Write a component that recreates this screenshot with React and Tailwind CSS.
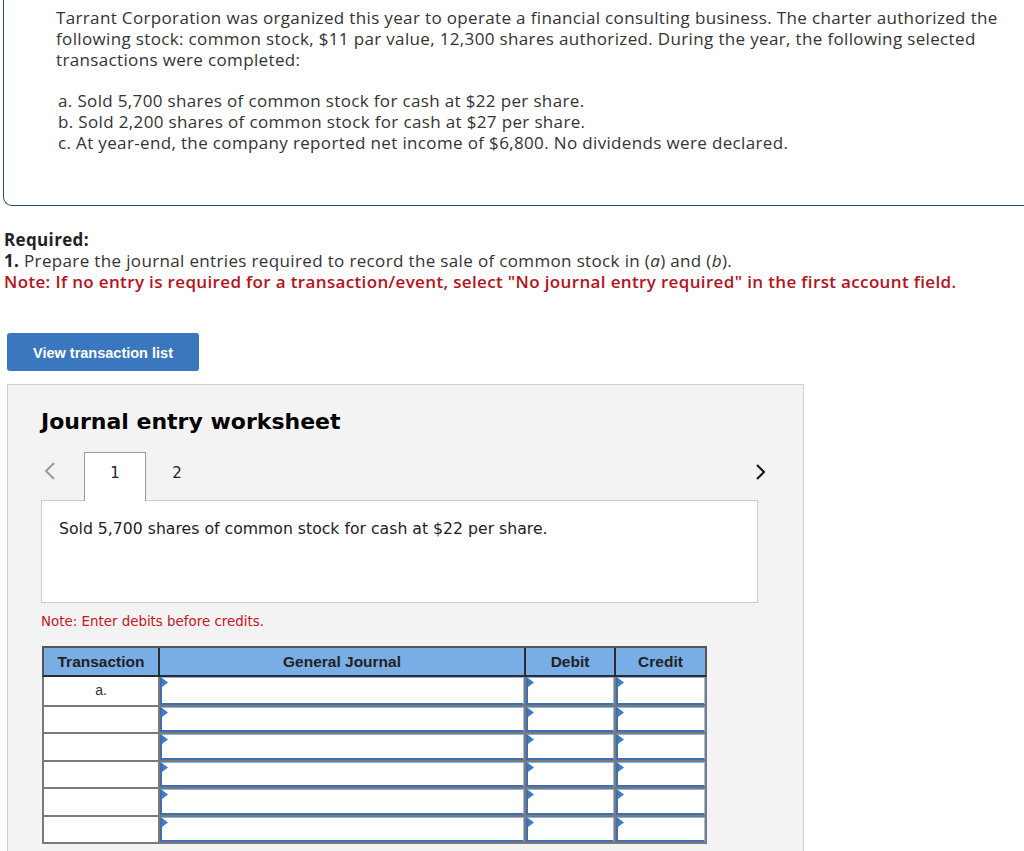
import React from "react";

const rows = ["a.", "", "", "", "", ""];

function InputCell() {
    return (
        <div className="relative h-full border-l-2 border-t border-b-2 border-r border-l-[#3f6fb0] border-t-[#8fb3e0] border-b-[#3f6fb0] border-r-[#9ebde6] bg-white">
            <svg className="absolute left-0 top-0" width="6" height="9" viewBox="0 0 6 9">
                <polygon points="0,0 6,4.5 0,9" fill="#3f7bc6" />
            </svg>
        </div>
    );
}

export default function App() {
    return (
        <div className="bg-white text-[#333] font-['Open_Sans','Liberation_Sans',sans-serif] text-[17px] tracking-[0.35px] pb-10">
            {/* Problem statement */}
            <div className="ml-[3px] h-[206px] border-l border-b border-[#1e4d7e] rounded-bl-[9px] pl-[52px] pr-3 pt-[7px] leading-[21px]">
                <p>
                    Tarrant Corporation was organized this year to operate a financial consulting business. The charter authorized the
                    following stock: common stock, $11 par value, 12,300 shares authorized. During the year, the following selected
                    transactions were completed:
                </p>
                <div className="mt-[20px] pl-[2px]">
                    <p>a. Sold 5,700 shares of common stock for cash at $22 per share.</p>
                    <p>b. Sold 2,200 shares of common stock for cash at $27 per share.</p>
                    <p>c. At year-end, the company reported net income of $6,800. No dividends were declared.</p>
                </div>
            </div>

            {/* Required */}
            <div className="pl-[4px] mt-[23px] leading-[21px]">
                <p className="font-bold text-[#222]">Required:</p>
                <p>
                    <span className="font-bold text-[#222]">1.</span> Prepare the journal entries required to record the sale of common stock in (<i>a</i>) and (<i>b</i>).
                </p>
                <p className="font-semibold text-[#b5121b]">
                    Note: If no entry is required for a transaction/event, select "No journal entry required" in the first account field.
                </p>
            </div>

            <button className="ml-[7px] mt-[41px] w-[192px] h-[38px] rounded-[3px] bg-[#3a77be] text-white font-bold tracking-normal text-[14.5px] leading-[38px] pt-px font-['Liberation_Sans',Arial,sans-serif]">
                View transaction list
            </button>

            {/* Worksheet */}
            <div className="ml-[7px] mt-[13px] w-[797px] bg-[#f3f3f3] border border-[#cfcfcf] pl-[33px] pr-[45px] pt-[24px] pb-[40px] tracking-normal font-['DejaVu_Sans','Verdana',sans-serif]">
                <h2 className="text-[22px] font-bold text-black leading-[26px]">Journal entry worksheet</h2>

                <div className="mt-[17px] flex items-end h-[48px]">
                    <div className="w-[43px] h-full flex items-center justify-start pl-[2px] pb-[10px]">
                        <svg width="13" height="20" viewBox="0 0 13 20">
                            <polyline points="11,2 3,10 11,18" fill="none" stroke="#999" strokeWidth="2" />
                        </svg>
                    </div>
                    <div className="relative z-10 -mb-px w-[62px] h-[49px] bg-white border border-b-0 border-[#999] flex items-start justify-center pt-[9px] text-[15px] text-[#222]">
                        1
                    </div>
                    <div className="w-[62px] h-full flex items-start justify-center pt-[10px] text-[15px] text-[#222]">2</div>
                    <div className="flex-1 h-full flex items-center justify-end pb-[8px]">
                        <svg width="13" height="20" viewBox="0 0 13 20" className="mr-[-9px]">
                            <polyline points="3,3 10,10 3,17" fill="none" stroke="#111" strokeWidth="2" />
                        </svg>
                    </div>
                </div>

                <div className="h-[103px] bg-white border border-[#cccccc] px-[17px] pt-[16px] text-[15.7px] text-[#222]">
                    Sold 5,700 shares of common stock for cash at $22 per share.
                </div>

                <p className="mt-[9px] text-[13.4px] text-[#c4161c]">Note: Enter debits before credits.</p>

                {/* Journal table */}
                <div className="mt-[14px] ml-[1px] w-[665px] font-['Liberation_Sans',Arial,sans-serif] text-[14px]">
                    <div className="flex h-[31px] bg-[#79ade5] border-2 border-[#555] border-b-[#2b2b2b] font-bold text-[15.5px] text-[#222]">
                        <div className="w-[116px] flex items-center justify-center border-r-2 border-[#2b2b2b]">Transaction</div>
                        <div className="w-[366px] flex items-center justify-center border-r-2 border-[#2b2b2b]">General Journal</div>
                        <div className="w-[90px] flex items-center justify-center border-r-2 border-[#2b2b2b]">Debit</div>
                        <div className="flex-1 flex items-center justify-center">Credit</div>
                    </div>
                    <div className="border-l-2 border-r-2 border-b-2 border-[#7a7a7a]">
                        {rows.map((r, i) => (
                            <div key={i} className={`flex h-[27.5px] bg-white ${i > 0 ? "border-t-2 border-[#7a7a7a]" : ""}`}>
                                <div className="w-[116px] flex items-center justify-center text-[#333] border-r-2 border-[#7a7a7a]">{r}</div>
                                <div className="w-[366px] border-r-2 border-[#7a7a7a]"><InputCell /></div>
                                <div className="w-[90px] border-r-2 border-[#7a7a7a]"><InputCell /></div>
                                <div className="flex-1"><InputCell /></div>
                            </div>
                        ))}
                    </div>
                </div>
            </div>
        </div>
    );
}
